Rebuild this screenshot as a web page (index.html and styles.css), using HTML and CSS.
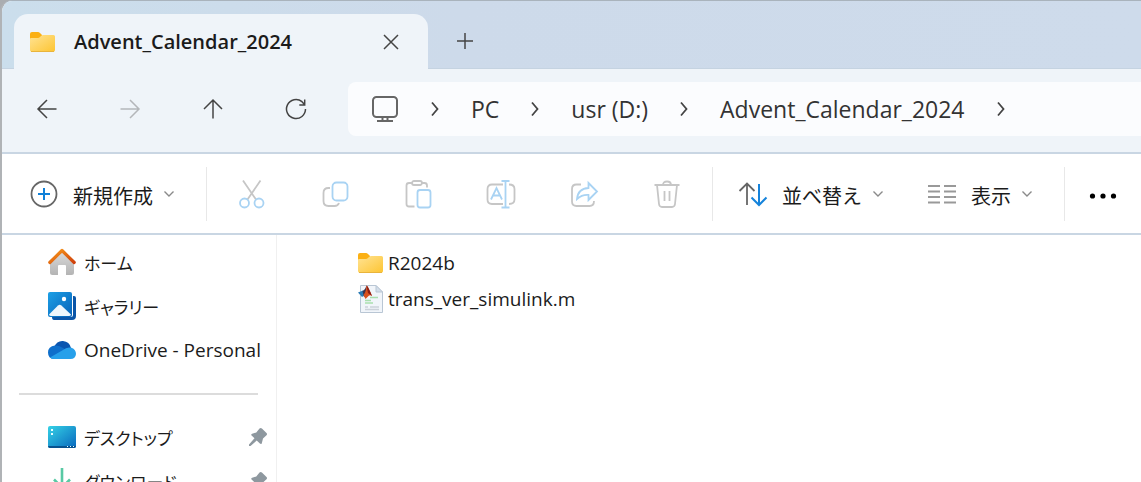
FILE: index.html
```html
<!DOCTYPE html>
<html lang="ja">
<head>
    <meta charset="UTF-8">
    <meta name="viewport" content="width=device-width, initial-scale=1.0">
    <title>Advent_Calendar_2024</title>
    <link rel="stylesheet" href="styles.css">
</head>
<body>

    <!-- Shared shapes -->
    <svg class="defs" width="0" height="0" aria-hidden="true">
        <defs>
            <linearGradient id="gFolder" x1="0" y1="0" x2="1" y2="1">
                <stop offset="0" stop-color="#ffe394"/>
                <stop offset="1" stop-color="#fdc533"/>
            </linearGradient>
            <linearGradient id="gRoof" x1="0" y1="0" x2="1" y2="1">
                <stop offset="0" stop-color="#f99b1c"/>
                <stop offset="1" stop-color="#cf3f0a"/>
            </linearGradient>
            <linearGradient id="gWall" x1="0" y1="0" x2="0" y2="1">
                <stop offset="0" stop-color="#d9d9d9"/>
                <stop offset="1" stop-color="#b4b4b4"/>
            </linearGradient>
            <linearGradient id="gPhoto" x1="0" y1="0" x2="1" y2="1">
                <stop offset="0" stop-color="#1da0e6"/>
                <stop offset="1" stop-color="#0661b8"/>
            </linearGradient>
            <linearGradient id="gDesk" x1="0" y1="0" x2="1" y2="1">
                <stop offset="0" stop-color="#35d2e6"/>
                <stop offset="1" stop-color="#0867bd"/>
            </linearGradient>
            <symbol id="folder" viewBox="0 0 26 22">
                <path d="M0 3q0-2 2-2h6q1 0 2 1l2 2v5H0z" fill="#fbb014"/>
                <path d="M0 8q0-1 1-1h7q1 0 2-1l1-1q1-1 2-1h10.500q1.500 0 1.500 1.500V19q0 1.500-1.500 1.500H1.500Q0 20.500 0 19z" fill="url(#gFolder)"/>
                <path d="M1 20.500h23" stroke="#e9b43c" fill="none"/>
            </symbol>
            <symbol id="chevron" viewBox="0 0 12 16">
                <path d="M3 1.500l5.500 6.500L3 14.500" fill="none" stroke="#444" stroke-width="1.800"/>
            </symbol>
            <symbol id="down" viewBox="0 0 12 12">
                <path d="M1.500 3.500L6 8l4.500-4.500" fill="none" stroke="#8a8a8a" stroke-width="1.400"/>
            </symbol>
            <symbol id="pin" viewBox="0 0 20 20">
                <path d="M11.500 1.500q1.200-1 2.400 0l4.600 4.500q1 1.200 0 2.200L15 11.500l-1.200 4.700q-.6 1.500-1.900.4L8.700 13.600 2.500 19H1v-1.500l5.500-6.200L3.600 8.600q-1-1.300.5-1.900L8.300 5.500z" fill="#8e989f"/>
            </symbol>
        </defs>
    </svg>

    <div class="window">
        <!-- Tab strip -->
        <header class="tabs">
            <div class="tab">
                <svg class="icon-file"><use href="#folder"/></svg>
                <span class="tab-title">Advent_Calendar_2024</span>
                <button type="button" aria-label="閉じる">
                    <svg width="18" height="18" viewBox="0 0 18 18"><path d="M2 2l14 14M16 2L2 16" class="ink"/></svg>
                </button>
            </div>
            <button type="button" class="new-tab" aria-label="新しいタブ">
                <svg width="18" height="18" viewBox="0 0 18 18"><path d="M9 1v16M1 9h16" class="ink"/></svg>
            </button>
        </header>

        <!-- Navigation and address bar -->
        <nav class="navbar">
            <div class="nav-buttons">
                <button type="button" aria-label="戻る">
                    <svg width="22" height="22" viewBox="0 0 22 22"><path d="M20.500 11H2M11 2l-9 9 9 9" class="ink"/></svg>
                </button>
                <button type="button" aria-label="進む" disabled>
                    <svg width="22" height="22" viewBox="0 0 22 22"><path d="M1.500 11H20M11 2l9 9-9 9" class="ink faded"/></svg>
                </button>
                <button type="button" aria-label="上へ">
                    <svg width="22" height="22" viewBox="0 0 22 22"><path d="M11 20.500V2M2 11l9-9 9 9" class="ink"/></svg>
                </button>
                <button type="button" aria-label="最新の情報に更新">
                    <svg width="22" height="22" viewBox="0 0 22 22"><path d="M20.500 11A9.500 9.500 0 1 1 17 3.700L19.500 6.500M19.700 1.500V7H14.300" class="ink"/></svg>
                </button>
            </div>
            <div class="address">
                <svg width="28" height="28" viewBox="0 0 28 28"><g fill="none" stroke="#666" stroke-width="2"><rect x="2" y="2" width="24" height="20" rx="3.500"/><path d="M6 26h16M11.500 22v4M16.500 22v4"/></g></svg>
                <svg class="chev"><use href="#chevron"/></svg>
                <a href="#">PC</a>
                <svg class="chev"><use href="#chevron"/></svg>
                <a href="#">usr (D:)</a>
                <svg class="chev"><use href="#chevron"/></svg>
                <a href="#">Advent_Calendar_2024</a>
                <svg class="chev"><use href="#chevron"/></svg>
            </div>
        </nav>

        <!-- Command bar -->
        <div class="toolbar">
            <button type="button" class="command">
                <svg class="icon-tool" viewBox="0 0 30 30"><circle cx="15" cy="15" r="12.500" fill="none" stroke="#666" stroke-width="1.800"/><path d="M15 9v12M9 15h12" fill="none" stroke="#0f80d8" stroke-width="2"/></svg>
                <span>新規作成</span>
                <svg class="drop"><use href="#down"/></svg>
            </button>
            <div class="edit-tools">
                <button type="button" aria-label="切り取り" disabled>
                    <svg class="icon-tool" viewBox="0 0 30 30"><path d="M6 1.500l13 19M23.500 1.500l-13 19" class="gray"/><circle cx="7.500" cy="24" r="4.500" class="blue"/><circle cx="22" cy="24" r="4.500" class="blue"/></svg>
                </button>
                <button type="button" aria-label="コピー" disabled>
                    <svg class="icon-tool" viewBox="0 0 30 30"><path d="M10 9H8.500Q3.500 9 3.500 14v8q0 5 5 5h6q3.500 0 4.500-3" class="gray"/><rect x="12.500" y="3.500" width="15" height="18" rx="4" class="blue"/></svg>
                </button>
                <button type="button" aria-label="貼り付け" disabled>
                    <svg class="icon-tool" viewBox="0 0 30 30"><path d="M9 4H6Q3.500 4 3.500 6.500V25q0 2.500 2.500 2.500h5.500M19 4h2.500Q24 4 24 6.500V8.500" class="gray"/><rect x="9" y="2" width="10" height="4" rx="2" class="gray"/><rect x="14.500" y="11" width="13" height="17.500" rx="2.500" class="blue"/></svg>
                </button>
                <button type="button" aria-label="名前の変更" disabled>
                    <svg class="icon-tool" viewBox="0 0 30 30"><path d="M17 5.500H6Q1.500 5.500 1.500 10v10.500Q1.500 25 6 25h11M23 5.500q5.500 0 5.500 4.500v10.500q0 4.500-5.500 4.500" class="gray"/><path d="M5 20.500l5.500-11.500 5.500 11.500M7 16.500h7M15.500 2h8M19.500 2v26.500M15.500 28.500h8" class="blue"/></svg>
                </button>
                <button type="button" aria-label="共有" disabled>
                    <svg class="icon-tool" viewBox="0 0 30 30"><path d="M12 5.500H7.500q-4.500 0-4.500 4.500v12.500Q3 27 7.500 27h13q4.500 0 4.500-5" class="gray"/><path d="M19.500 4l8.500 8.500-8.500 8.500v-5q-6.500-.5-11.500 4Q9 9.500 19.500 9z" class="blue"/></svg>
                </button>
                <button type="button" aria-label="削除" disabled>
                    <svg class="icon-tool" viewBox="0 0 30 30"><path d="M2.500 6h25M11 6q0-3.500 4-3.500T19 6M5 6l2 19q.4 3 3 3h10q2.600 0 3-3L25 6M12.500 12v10M17.500 12v10" class="gray"/></svg>
                </button>
            </div>
            <div class="view-tools">
                <button type="button" class="command">
                    <svg class="icon-tool" viewBox="0 0 30 30"><path d="M9 26V4.500M1.500 12L9 4.500 16.500 12" fill="none" stroke="#666" stroke-width="1.800"/><path d="M21 5v21M13.500 18.500L21 26l7.500-7.500" fill="none" stroke="#1583db" stroke-width="2"/></svg>
                    <span>並べ替え</span>
                    <svg class="drop"><use href="#down"/></svg>
                </button>
                <button type="button" class="command">
                    <svg class="icon-tool" viewBox="0 0 30 30"><path d="M1 7h12M17 7h12M1 12.500h12M17 12.500h12M1 18h12M17 18h12M1 23.500h12M17 23.500h12" fill="none" stroke="#999" stroke-width="2"/></svg>
                    <span>表示</span>
                    <svg class="drop"><use href="#down"/></svg>
                </button>
            </div>
            <button type="button" class="more" aria-label="もっと見る">
                <svg width="30" height="30" viewBox="0 0 30 30"><circle cx="4.500" cy="17" r="2.600"/><circle cx="15" cy="17" r="2.600"/><circle cx="25.500" cy="17" r="2.600"/></svg>
            </button>
        </div>

        <div class="content">
            <!-- Navigation pane -->
            <aside class="sidebar">
                <a href="#">
                    <svg class="icon-side" viewBox="0 0 28 28"><path d="M2 14L14 4l12 10v10.500q0 2.500-2.500 2.500H18v-9q0-1-1-1h-6q-1 0-1 1v9H4.500Q2 27 2 24.500z" fill="url(#gWall)"/><path d="M1.800 14.500L14 2.500l12.200 12" fill="none" stroke="url(#gRoof)" stroke-width="3.200" stroke-linecap="round" stroke-linejoin="round"/></svg>
                    <span>ホーム</span>
                </a>
                <a href="#">
                    <svg class="icon-side" viewBox="0 0 28 28"><path d="M25 4h1q2 0 2 2v18q0 4-4 4H6q-2 0-2-3h19q2 0 2-2z" fill="#0a55a8"/><rect x="0" y="0" width="24" height="25" rx="2" fill="url(#gPhoto)"/><path d="M1 22.500l9-9q1.700-1.500 3.400 0l9.600 9q-.5 1.500-2 1.500H3q-1.500 0-2-1.500z" fill="#eef6fc"/><circle cx="16" cy="7" r="2.200" fill="#fff"/></svg>
                    <span>ギャラリー</span>
                </a>
                <a href="#">
                    <svg class="icon-side" viewBox="0 0 28 28"><path d="M6 11q3-6.500 9-6 6.500.5 8 7l-9 5z" fill="#0a55b0"/><path d="M6 23q-6-.5-6-6.500 0-6 7-7 4-.5 8 2.500l5 3-11 8z" fill="#0f6fcb"/><path d="M2 21.500L15 14q4-3.500 8.500-2.200Q28 13.500 28 18q-.5 5-5.500 5H6q-2.500 0-4-1.500z" fill="#27a0ea"/></svg>
                    <span class="latin">OneDrive - Personal</span>
                </a>
                <hr>
                <a href="#">
                    <svg class="icon-side" viewBox="0 0 28 28"><rect x="0" y="3" width="28" height="22" rx="2" fill="url(#gDesk)"/><path d="M0 23h28q0 2-2 2H2q-2 0-2-2z" fill="#07528f"/><path d="M3 6h2v2H3zM3 10h2v2H3zM19 23h1v1h-1zM22 23h1v1h-1zM25 23h1v1h-1z" fill="#e8fbff"/></svg>
                    <span>デスクトップ</span>
                    <svg class="pin"><use href="#pin"/></svg>
                </a>
                <a href="#">
                    <svg class="icon-side" viewBox="0 0 28 28"><path d="M14 1v19M6 12.500l8 8 8-8M5 26h18" fill="none" stroke="#58c9a4" stroke-width="2.600"/></svg>
                    <span>ダウンロード</span>
                    <svg class="pin"><use href="#pin"/></svg>
                </a>
            </aside>

            <!-- File list -->
            <main class="files">
                <a href="#">
                    <svg class="icon-file"><use href="#folder"/></svg>
                    <span class="latin">R2024b</span>
                </a>
                <a href="#">
                    <svg class="icon-doc" viewBox="0 0 26 30"><path d="M2.500 1.500h15.500l6.500 6.500v20.500h-22z" fill="#f1f5fa" stroke="#b9c6d4"/><path d="M18 1.500V8h6.500z" fill="#d3deea" stroke="#b9c6d4"/><path d="M12 13.500h8M7 16.500h6M7 19h8" stroke="#a9dfae" stroke-width="1.600"/><path d="M7 23h3M12 23h9M7 25.500h14" stroke="#ccd2da" stroke-width="1.400"/><path d="M0 8.500l5-2 3.500 3.500L4 13z" fill="#2b7bb5"/><path d="M4.500 7Q7 6 8.500 1.500l1 9L6 13z" fill="#3c3350"/><path d="M8.500 1.500Q10 2 14 12q-2-1.500-3.500 0T7.500 15L5.500 11q2.500-2.500 3-9.500z" fill="#d9501e"/><path d="M8.500 1.500Q10 2 14 12l-4-3z" fill="#8c1d14"/></svg>
                    <span class="latin">trans_ver_simulink.m</span>
                </a>
            </main>
        </div>
    </div>

</body>
</html>
```

FILE: styles.css
```css
* {
    box-sizing: border-box;
}

body {
    margin: 0;
    height: 100vh;
    overflow: hidden;
    background: #aaadb0;
    font-family: "Open Sans", "Noto Sans CJK JP", sans-serif;
    font-size: 17px;
    color: #1b1b1b;
}

.defs {
    position: absolute;
}

svg {
    display: block;
    flex-shrink: 0;
}

button {
    display: flex;
    align-items: center;
    justify-content: center;
    padding: 0;
    border: none;
    background: none;
    font: inherit;
    color: inherit;
}

a {
    color: inherit;
    text-decoration: none;
}

.ink {
    fill: none;
    stroke: #444;
    stroke-width: 1.5;
}

.faded {
    stroke: #b4b7ba;
}

.gray {
    fill: none;
    stroke: #c6c6c6;
    stroke-width: 1.8;
}

.blue {
    fill: none;
    stroke: #a9d3f3;
    stroke-width: 1.8;
}

.latin {
    font-size: 19px;
}

.window {
    display: flex;
    flex-direction: column;
    height: 100%;
    border-top: 1px solid #a9b3bc;
    border-left: 2px solid #b0b3b6;
    border-top-left-radius: 12px;
    background: #fff;
    overflow: hidden;
}

/* Tabs */
.tabs {
    display: flex;
    flex-shrink: 0;
    height: 68px;
    padding: 13px 0 0 12px;
    border-bottom: 1px solid #c5d3e1;
    background: linear-gradient(90deg, #cbdeec, #cddaea 40%, #cedbeb);
}

.tab {
    display: flex;
    align-items: center;
    width: 414px;
    margin-bottom: -1px;
    padding: 0 28px 0 16px;
    border-radius: 14px 14px 0 0;
    background: #eff4f9;
}

.tab-title {
    flex: 1;
    margin-left: 18px;
    font-size: 20px;
    font-weight: 600;
}

.new-tab {
    width: 74px;
}

/* Address bar */
.navbar {
    display: flex;
    flex-shrink: 0;
    align-items: center;
    height: 85px;
    padding: 0 0 3px 3px;
    border-bottom: 2px solid #c9d6e3;
    background: #eff4f9;
}

.nav-buttons {
    display: flex;
}

.nav-buttons button {
    width: 83px;
    height: 54px;
}

.address {
    display: flex;
    flex: 1;
    align-items: center;
    gap: 30px;
    height: 54px;
    margin-left: 11px;
    padding-left: 23px;
    border-radius: 8px 0 0 8px;
    background: #fbfcfe;
    font-size: 23px;
    white-space: nowrap;
    color: #333;
}

.chev {
    width: 12px;
    height: 16px;
}

/* Command bar */
.toolbar {
    display: flex;
    flex-shrink: 0;
    align-items: center;
    height: 81px;
    padding-left: 27px;
    border-bottom: 2px solid #c9d6e3;
    font-size: 20px;
}

.icon-tool {
    width: 30px;
    height: 30px;
}

.command {
    gap: 14px;
    padding-right: 31px;
    white-space: nowrap;
}

.command span {
    padding-top: 3px;
}

.drop {
    width: 12px;
    height: 12px;
    margin-left: -4px;
}

.edit-tools,
.view-tools {
    display: flex;
    align-items: center;
    height: 54px;
    border-left: 1px solid #e8e8e8;
}

.edit-tools {
    padding: 0 4px 0 3px;
}

.edit-tools button {
    width: 83px;
}

.view-tools {
    gap: 12px;
    padding-left: 25px;
    border-right: 1px solid #e8e8e8;
}

.more {
    width: 80px;
    height: 54px;
}

/* Panes */
.content {
    display: flex;
    flex: 1;
    min-height: 0;
}

.sidebar {
    width: 275px;
    padding-top: 5px;
    border-right: 1px solid #f0f0f0;
    overflow: hidden;
}

.sidebar a {
    display: flex;
    align-items: center;
    gap: 8px;
    height: 44px;
    padding: 0 8px 0 46px;
    white-space: nowrap;
    font-feature-settings: "palt";
}

.sidebar hr {
    height: 2px;
    margin: 21px 18px 20px 17px;
    border: none;
    background: #dcdcdc;
}

.icon-side {
    width: 28px;
    height: 28px;
}

.pin {
    width: 20px;
    height: 20px;
    margin-left: auto;
}

.files {
    flex: 1;
    padding: 10px 0 0 81px;
}

.files a {
    display: flex;
    align-items: center;
    gap: 4px;
    height: 36px;
}

.icon-file {
    width: 26px;
    height: 22px;
}

.icon-doc {
    width: 26px;
    height: 30px;
}
```
